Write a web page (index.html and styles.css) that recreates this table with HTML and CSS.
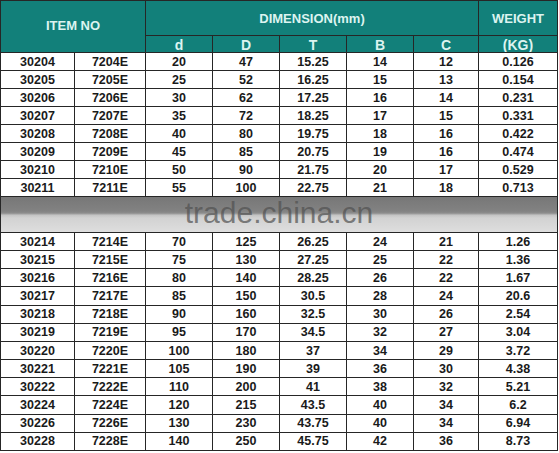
FILE: index.html
```html
<!DOCTYPE html>
<html>
<head>
<meta charset="utf-8">
<link rel="stylesheet" href="styles.css">
</head>
<body>
<div class="sheet">
  <div class="cell head item">ITEM NO</div>
  <div class="cell head dim">DIMENSION(mm)</div>
  <div class="cell head">WEIGHT</div>
  <div class="cell head sub">d</div>
  <div class="cell head sub">D</div>
  <div class="cell head sub">T</div>
  <div class="cell head sub">B</div>
  <div class="cell head sub">C</div>
  <div class="cell head sub">(KG)</div>

  <div class="cell">30204</div><div class="cell">7204E</div><div class="cell">20</div><div class="cell">47</div><div class="cell">15.25</div><div class="cell">14</div><div class="cell">12</div><div class="cell">0.126</div>
  <div class="cell">30205</div><div class="cell">7205E</div><div class="cell">25</div><div class="cell">52</div><div class="cell">16.25</div><div class="cell">15</div><div class="cell">13</div><div class="cell">0.154</div>
  <div class="cell">30206</div><div class="cell">7206E</div><div class="cell">30</div><div class="cell">62</div><div class="cell">17.25</div><div class="cell">16</div><div class="cell">14</div><div class="cell">0.231</div>
  <div class="cell">30207</div><div class="cell">7207E</div><div class="cell">35</div><div class="cell">72</div><div class="cell">18.25</div><div class="cell">17</div><div class="cell">15</div><div class="cell">0.331</div>
  <div class="cell">30208</div><div class="cell">7208E</div><div class="cell">40</div><div class="cell">80</div><div class="cell">19.75</div><div class="cell">18</div><div class="cell">16</div><div class="cell">0.422</div>
  <div class="cell">30209</div><div class="cell">7209E</div><div class="cell">45</div><div class="cell">85</div><div class="cell">20.75</div><div class="cell">19</div><div class="cell">16</div><div class="cell">0.474</div>
  <div class="cell">30210</div><div class="cell">7210E</div><div class="cell">50</div><div class="cell">90</div><div class="cell">21.75</div><div class="cell">20</div><div class="cell">17</div><div class="cell">0.529</div>
  <div class="cell">30211</div><div class="cell">7211E</div><div class="cell">55</div><div class="cell">100</div><div class="cell">22.75</div><div class="cell">21</div><div class="cell">18</div><div class="cell">0.713</div>

  <div class="band"><span class="mark">trade.china.cn</span></div>

  <div class="cell">30214</div><div class="cell">7214E</div><div class="cell">70</div><div class="cell">125</div><div class="cell">26.25</div><div class="cell">24</div><div class="cell">21</div><div class="cell">1.26</div>
  <div class="cell">30215</div><div class="cell">7215E</div><div class="cell">75</div><div class="cell">130</div><div class="cell">27.25</div><div class="cell">25</div><div class="cell">22</div><div class="cell">1.36</div>
  <div class="cell">30216</div><div class="cell">7216E</div><div class="cell">80</div><div class="cell">140</div><div class="cell">28.25</div><div class="cell">26</div><div class="cell">22</div><div class="cell">1.67</div>
  <div class="cell">30217</div><div class="cell">7217E</div><div class="cell">85</div><div class="cell">150</div><div class="cell">30.5</div><div class="cell">28</div><div class="cell">24</div><div class="cell">20.6</div>
  <div class="cell">30218</div><div class="cell">7218E</div><div class="cell">90</div><div class="cell">160</div><div class="cell">32.5</div><div class="cell">30</div><div class="cell">26</div><div class="cell">2.54</div>
  <div class="cell">30219</div><div class="cell">7219E</div><div class="cell">95</div><div class="cell">170</div><div class="cell">34.5</div><div class="cell">32</div><div class="cell">27</div><div class="cell">3.04</div>
  <div class="cell">30220</div><div class="cell">7220E</div><div class="cell">100</div><div class="cell">180</div><div class="cell">37</div><div class="cell">34</div><div class="cell">29</div><div class="cell">3.72</div>
  <div class="cell">30221</div><div class="cell">7221E</div><div class="cell">105</div><div class="cell">190</div><div class="cell">39</div><div class="cell">36</div><div class="cell">30</div><div class="cell">4.38</div>
  <div class="cell">30222</div><div class="cell">7222E</div><div class="cell">110</div><div class="cell">200</div><div class="cell">41</div><div class="cell">38</div><div class="cell">32</div><div class="cell">5.21</div>
  <div class="cell">30224</div><div class="cell">7224E</div><div class="cell">120</div><div class="cell">215</div><div class="cell">43.5</div><div class="cell">40</div><div class="cell">34</div><div class="cell">6.2</div>
  <div class="cell">30226</div><div class="cell">7226E</div><div class="cell">130</div><div class="cell">230</div><div class="cell">43.75</div><div class="cell">40</div><div class="cell">34</div><div class="cell">6.94</div>
  <div class="cell">30228</div><div class="cell">7228E</div><div class="cell">140</div><div class="cell">250</div><div class="cell">45.75</div><div class="cell">42</div><div class="cell">36</div><div class="cell">8.73</div>
</div>
</body>
</html>
```
FILE: styles.css
```css
html, body {
  margin: 0;
  padding: 0;
  background: #ffffff;
}

.sheet {
  display: grid;
  grid-template-columns: 74px 71px 67px 67px 67px 67px 65px 79px;
  grid-template-rows: 35px 17px repeat(8, 18px) 36px repeat(12, 18.17px);
  width: 558px;
  box-sizing: border-box;
  border-left: 1px solid #262626;
  border-top: 1px solid #262626;
  font-family: "Liberation Sans", Arial, sans-serif;
}

.cell {
  box-sizing: border-box;
  border-right: 1px solid #262626;
  border-bottom: 1px solid #262626;
  display: flex;
  align-items: center;
  justify-content: center;
  font-size: 12.5px;
  font-weight: bold;
  color: #1a1a1a;
  white-space: nowrap;
  overflow: hidden;
}

.head {
  background: #12807a;
  color: #dcf4f0;
  font-size: 13px;
}

.item {
  grid-column: 1 / 3;
  grid-row: 1 / 3;
  padding-bottom: 2px;
}

.dim {
  grid-column: 3 / 8;
}

.sub {
  font-size: 14px;
  padding-top: 1px;
}

.band {
  grid-column: 1 / -1;
  box-sizing: border-box;
  border-right: 1px solid #262626;
  border-bottom: 1px solid #262626;
  background: linear-gradient(to bottom,
    #777777 0%, #828282 40%, #8c8c8c 46%,
    #c4c4c4 52%, #d2d2d2 60%, #dedede 100%);
  display: flex;
  align-items: center;
  justify-content: center;
}

.mark {
  font-family: "Liberation Sans", Arial, sans-serif;
  font-size: 30px;
  line-height: 30px;
  color: rgba(80, 80, 80, 0.7);
  margin-bottom: 3px;
}
```
